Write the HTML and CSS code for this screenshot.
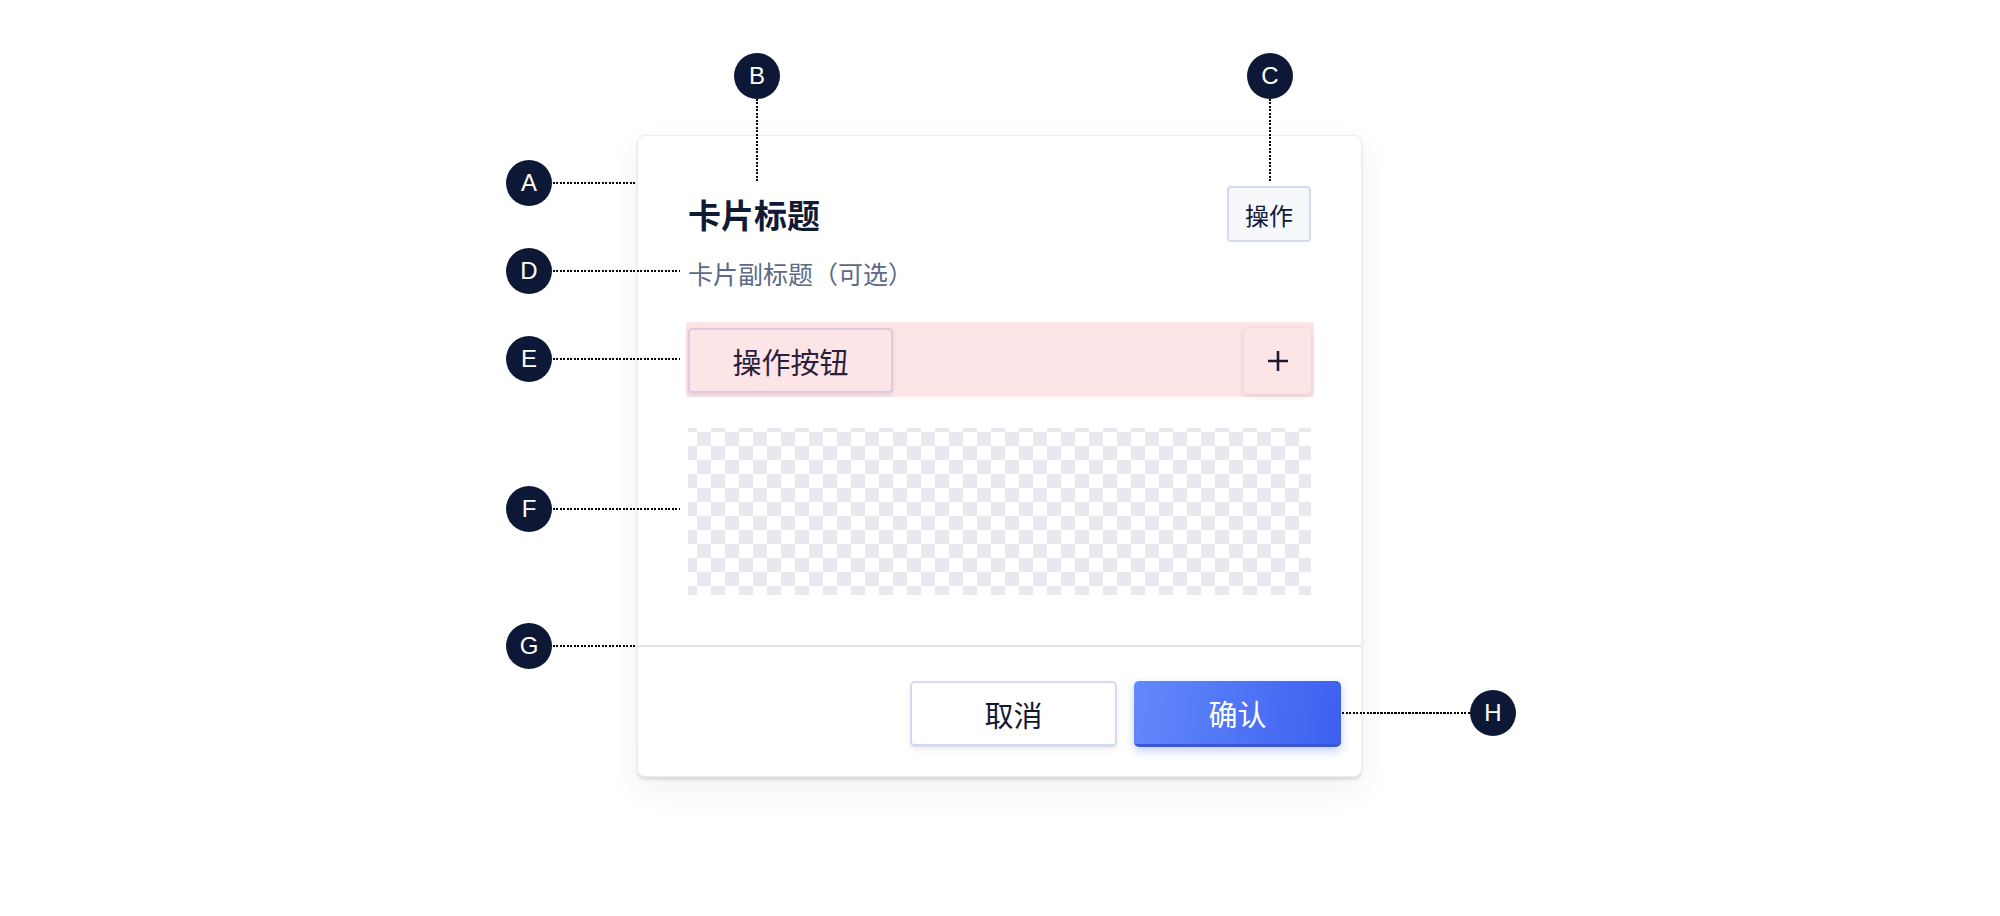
FILE: index.html
```html
<!DOCTYPE html>
<html lang="zh-CN">
<head>
    <meta charset="UTF-8">
    <meta name="viewport" content="width=device-width, initial-scale=1.0">
    <title>卡片组件结构</title>
    <link rel="stylesheet" href="styles.css">
</head>
<body>
    <main class="stage">
        <div class="card">
            <div class="card-body">
                <div class="card-header">
                    <h2 class="card-title">卡片标题</h2>
                    <button class="header-btn">操作</button>
                </div>
                <p class="card-subtitle">卡片副标题（可选）</p>

                <div class="action-row">
                    <button class="action-btn">操作按钮</button>
                    <button class="add-btn" aria-label="添加">
                        <svg width="22" height="22" viewBox="0 0 22 22">
                            <path d="M11 1v20M1 11h20" stroke="#1f1934" stroke-width="2.6" fill="none"/>
                        </svg>
                    </button>
                </div>

                <div class="media-slot"></div>
            </div>

            <div class="card-footer">
                <button class="btn btn-cancel">取消</button>
                <button class="btn btn-confirm">确认</button>
            </div>
        </div>

        <!-- annotation markers -->
        <span class="marker" style="left: 506px; top: 160px;">A</span>
        <span class="marker" style="left: 734px; top: 53px;">B</span>
        <span class="marker" style="left: 1247px; top: 53px;">C</span>
        <span class="marker" style="left: 506px; top: 248px;">D</span>
        <span class="marker" style="left: 506px; top: 336px;">E</span>
        <span class="marker" style="left: 506px; top: 486px;">F</span>
        <span class="marker" style="left: 506px; top: 623px;">G</span>
        <span class="marker" style="left: 1470px; top: 690px;">H</span>

        <span class="leader leader-h" style="left: 553px; top: 182px; width: 84px;"></span>
        <span class="leader leader-v" style="left: 756px; top: 99px; height: 84px;"></span>
        <span class="leader leader-v" style="left: 1269px; top: 99px; height: 84px;"></span>
        <span class="leader leader-h" style="left: 553px; top: 270px; width: 127px;"></span>
        <span class="leader leader-h" style="left: 553px; top: 358px; width: 127px;"></span>
        <span class="leader leader-h" style="left: 553px; top: 508px; width: 127px;"></span>
        <span class="leader leader-h" style="left: 553px; top: 645px; width: 84px;"></span>
        <span class="leader leader-h" style="left: 1342px; top: 712px; width: 128px;"></span>
    </main>
</body>
</html>
```

FILE: styles.css
```css
* {
    margin: 0;
    padding: 0;
    box-sizing: border-box;
}

:root {
    --navy: #0d1836;
    --text: #111a35;
    --muted: #5b6a86;
    --line: #d6daf0;
    --pink: #fde4e6;
}

body {
    background: #fff;
    font-family: "Noto Sans CJK SC", "Noto Sans", sans-serif;
    color: var(--text);
}

.stage {
    position: relative;
    width: 2000px;
    height: 916px;
    padding: 135px 0 0 637px;
}

button {
    font-family: inherit;
    cursor: pointer;
}

/* card */
.card {
    width: 725px;
    background: #fff;
    border: 1px solid #ececf1;
    border-radius: 8px;
    box-shadow: 0 3px 3px rgba(0,0,0,0.1), 0 12px 34px rgba(0,0,0,0.06);
}

.card-body {
    padding: 50px;
}

.card-header {
    display: flex;
    justify-content: space-between;
    align-items: center;
    height: 56px;
}

.card-title {
    font-size: 33px;
    font-weight: 700;
    line-height: 1;
    color: var(--text);
}

.header-btn {
    width: 84px;
    height: 56px;
    background: #f7f8fc;
    border: 2px solid var(--line);
    border-radius: 4px;
    font-size: 24px;
    color: var(--text);
}

.card-subtitle {
    margin-top: 13px;
    font-size: 25px;
    line-height: 36px;
    color: var(--muted);
}

.action-row {
    display: flex;
    justify-content: space-between;
    align-items: flex-start;
    margin: 31px -3px 0 -2px;
    padding: 6px 3px 3px 2px;
    height: 75px;
    background: var(--pink);
}

.action-btn {
    width: 205px;
    height: 65px;
    background: var(--pink);
    border: 2px solid #dccbdc;
    border-radius: 4px;
    box-shadow: 0 2px 4px rgba(80,40,80,0.12);
    font-size: 29px;
    color: #271f3c;
}

.add-btn {
    display: flex;
    align-items: center;
    justify-content: center;
    width: 67px;
    height: 66px;
    background: var(--pink);
    border: none;
    border-radius: 5px;
    box-shadow: 0 2px 6px rgba(80,40,60,0.14);
}

.media-slot {
    margin-top: 31px;
    height: 167px;
    background: repeating-conic-gradient(#e8e8ef 0 25%, #fff 0 50%) 23px 4px / 28px 28px;
}

/* footer */
.card-footer {
    display: flex;
    justify-content: flex-end;
    gap: 17px;
    padding: 34px 20px 29px;
    border-top: 2px solid #dfe1f4;
}

.btn {
    width: 207px;
    height: 66px;
    border-radius: 5px;
    font-size: 29px;
}

.btn-cancel {
    background: #fff;
    border: 2px solid var(--line);
    border-bottom-width: 3px;
    box-shadow: 0 3px 6px rgba(0,0,0,0.07);
    color: var(--text);
}

.btn-confirm {
    background: linear-gradient(100deg, #6489fc, #3b60ef);
    border: none;
    border-bottom: 3px solid #3b57d2;
    box-shadow: 0 4px 10px rgba(61,97,240,0.3);
    color: #fff;
}

/* annotations */
.marker {
    position: absolute;
    width: 46px;
    height: 46px;
    border-radius: 50%;
    background: var(--navy);
    color: #fff;
    font-family: "Liberation Sans", Arial, sans-serif;
    font-size: 24px;
    line-height: 46px;
    text-align: center;
}

.leader {
    position: absolute;
}

.leader-h {
    height: 2px;
    background: repeating-linear-gradient(90deg, #000 0 2px, transparent 2px 3.5px);
}

.leader-v {
    width: 2px;
    background: repeating-linear-gradient(180deg, #000 0 2px, transparent 2px 3.5px);
}
```
